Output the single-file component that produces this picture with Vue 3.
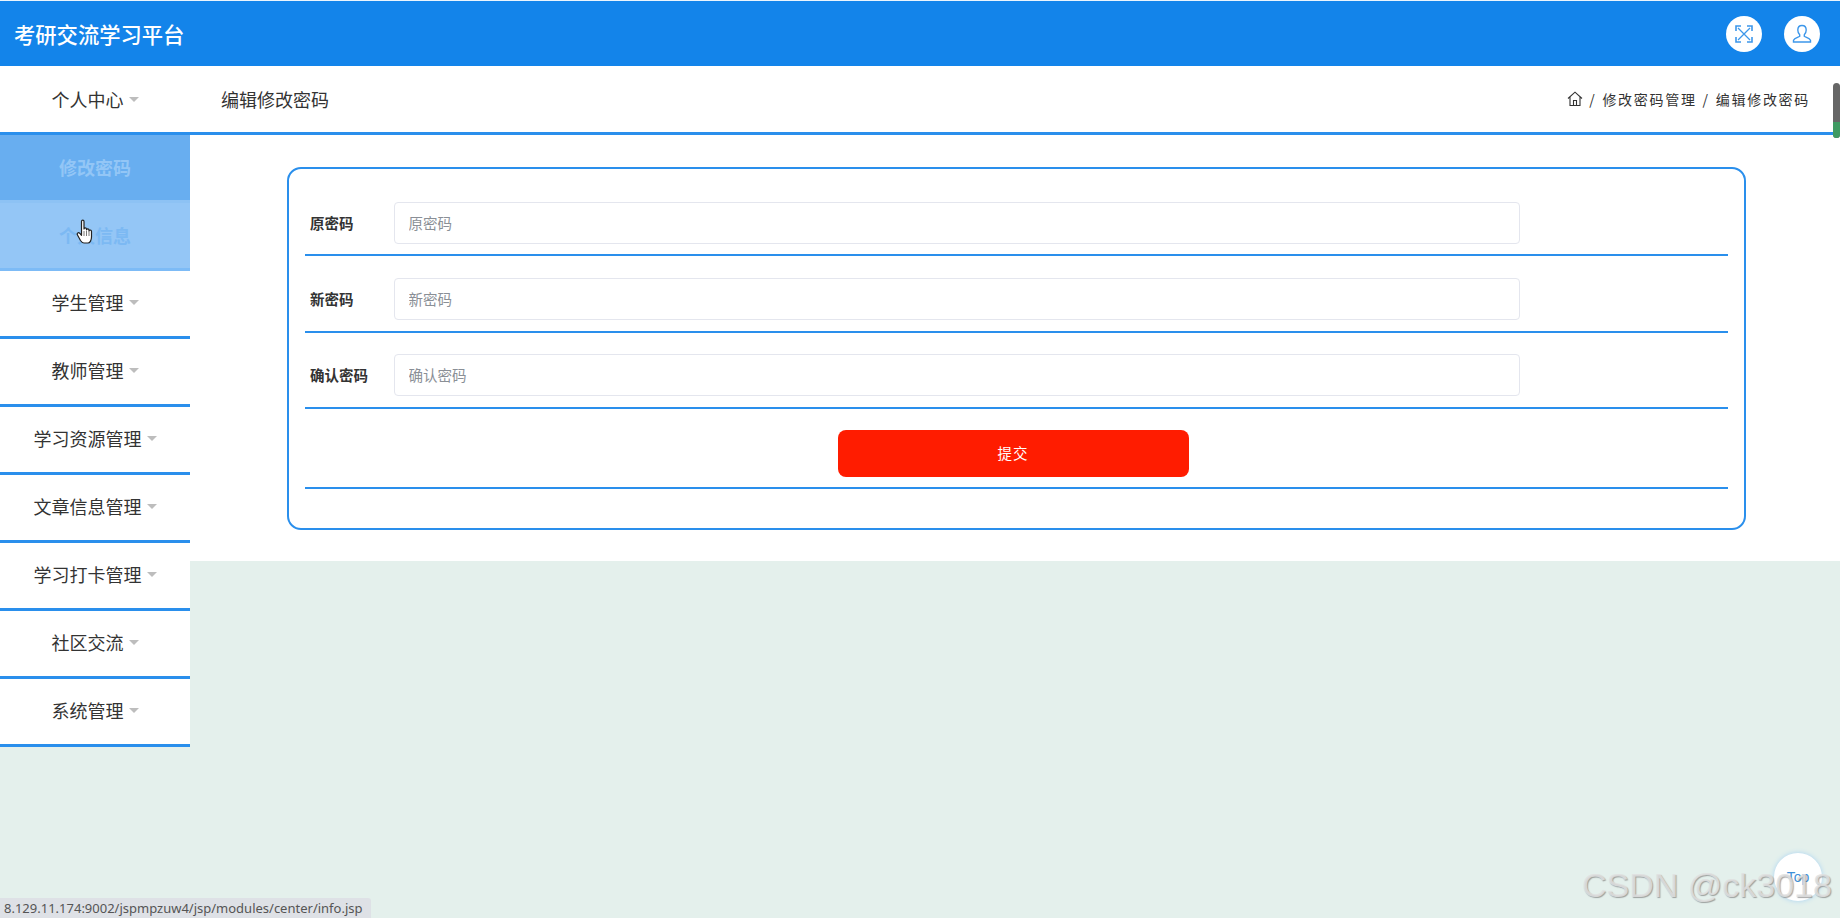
<script setup>
const menus = ['学生管理', '教师管理', '学习资源管理', '文章信息管理', '学习打卡管理', '社区交流', '系统管理']
const fields = ['原密码', '新密码', '确认密码']
</script>

<template>
  <div class="page">
    <header class="topbar">
      <div class="brand">考研交流学习平台</div>
      <div class="actions">
        <span class="round">
          <svg width="20" height="20" viewBox="0 0 20 20" fill="none" stroke="#3d97ea" stroke-width="1.3">
            <path d="M4 4 16 16M16 4 4 16" />
            <path d="M2 7V2h5M13 2h5v5M18 13v5h-5M7 18H2v-5" stroke-width="1.6" />
          </svg>
        </span>
        <span class="round">
          <svg width="20" height="20" viewBox="0 0 20 20" fill="none" stroke="#3d97ea" stroke-width="1.4">
            <path d="M10 1.5c-2.8 0-4.2 2-4.2 4.6 0 2 .8 3.700 1.900 4.700v1.500c-1.500 1.200-5.200 1.700-6.200 4v1.700h17v-1.700c-1-2.300-4.700-2.800-6.200-4v-1.500c1.100-1 1.900-2.700 1.900-4.700 0-2.600-1.400-4.600-4.200-4.600z" />
          </svg>
        </span>
      </div>
    </header>

    <div class="body">
      <aside class="side">
        <div class="item first">个人中心<i class="caret"></i></div>
        <div class="sub sub-a">修改密码</div>
        <div class="sub sub-b">个人信息</div>
        <div v-for="m in menus" :key="m" class="item">{{ m }}<i class="caret"></i></div>
      </aside>

      <main class="main">
        <div class="crumbbar">
          <h1 class="title">编辑修改密码</h1>
          <div class="crumbs">
            <svg width="16" height="16" viewBox="0 0 16 16" fill="none" stroke="#333" stroke-width="1.100">
              <path d="M1 7.500 8 1.200l7 6.300M3 6v8.500h10V6M6.500 14.500V9.500h3v5" />
            </svg>
            <span class="sep">/</span><span>修改密码管理</span><span class="sep">/</span><span>编辑修改密码</span>
          </div>
        </div>

        <section class="panel">
          <form class="card" @submit.prevent>
            <div v-for="f in fields" :key="f" class="row">
              <label class="label">{{ f }}</label>
              <input class="input" :placeholder="f" />
            </div>
            <div class="row row-btn">
              <button class="submit" type="submit">提交</button>
            </div>
          </form>
        </section>
      </main>
    </div>

    <svg class="hand" width="20" height="26" viewBox="0 0 20 26">
      <path d="M5.500 2.500c0-1.800 2.500-1.800 2.500 0V10c.2-1.500 2.400-1.500 2.500 0v.8c.3-1.400 2.400-1.300 2.500.2v.8c.4-1.200 2.400-1 2.500.5V18c0 3-1.500 6-3.500 6H8c-1.500 0-2.500-1-3.500-2.500L1.500 16c-1-1.800 1-3 2.300-1.600l1.700 1.900z" fill="#fff" stroke="#222" stroke-width="1.200" stroke-linejoin="round" />
      <path d="M8 12v5M10.500 12v5M13 12v5" stroke="#555" stroke-width=".8" />
    </svg>

    <div class="scroll"><span class="scroll-end"></span></div>
    <div class="status">8.129.11.174:9002/jspmpzuw4/jsp/modules/center/info.jsp</div>
    <div class="to-top">Top</div>
    <div class="mark">CSDN @ck3018</div>
  </div>
</template>

<style>
html, body { margin: 0; height: 100%; overflow: hidden; }
</style>

<style scoped>
.page {
  position: relative;
  width: 1840px;
  height: 918px;
  overflow: hidden;
  background: #e4f0ec;
  color: #333;
  font-family: "Noto Sans CJK SC", "Noto Sans", sans-serif;
}
.topbar {
  box-sizing: border-box;
  height: 66px;
  border-top: 1px solid #eaf4fd;
  background: #1384ea;
  display: flex;
  align-items: center;
  justify-content: space-between;
  padding: 0 20px 0 14px;
}
.brand { color: #fff; font-size: 21.300px; font-weight: 500; }
.actions { display: flex; gap: 22px; }
.round {
  width: 36px;
  height: 36px;
  border-radius: 50%;
  background: #fff;
  display: flex;
  align-items: center;
  justify-content: center;
}
.body { display: flex; align-items: flex-start; }
.side { width: 190px; flex: none; }
.item {
  box-sizing: border-box;
  height: 68px;
  padding-bottom: 4px;
  background: #fff;
  border-bottom: 3px solid #2a8fec;
  display: flex;
  align-items: center;
  justify-content: center;
  font-size: 18px;
}
.item.first { height: 69px; padding-bottom: 0; }
.caret {
  margin-left: 5px;
  margin-top: 1px;
  border-left: 5px solid transparent;
  border-right: 5px solid transparent;
  border-top: 5px solid #bdbdbd;
}
.sub {
  box-sizing: border-box;
  height: 68px;
  display: flex;
  align-items: center;
  justify-content: center;
  font-size: 18px;
  font-weight: 700;
}
.sub-a { background: #68aef0; color: #93c6f6; border-bottom: 3px solid #8dc2f4; padding-bottom: 2px; }
.sub-b { background: #94c6f6; color: #7cb9f3; border-bottom: 3px solid #7dbbf6; padding-bottom: 2px; }
.main { flex: 1; min-width: 0; }
.crumbbar {
  box-sizing: border-box;
  height: 69px;
  background: #fff;
  border-bottom: 3px solid #2a8fec;
  display: flex;
  align-items: center;
  justify-content: space-between;
  padding: 0 30px 0 32px;
}
.title { margin: 0 0 0 -1px; font-size: 18px; font-weight: 400; color: #333; }
.crumbs { display: flex; align-items: center; font-size: 14px; letter-spacing: 1.700px; color: #333; }
.sep { margin: 0 6px; }
.panel {
  background: #fff;
  padding: 32px 94px 31px 97px;
}
.card {
  box-sizing: border-box;
  height: 363px;
  border: 2px solid #2a8fec;
  border-radius: 14px;
  padding: 11px 16px 0;
}
.row {
  display: flex;
  align-items: center;
  padding: 22px 0 11px;
  border-bottom: 2px solid #2a8fec;
}
.row:first-child { padding-bottom: 10px; }
.row:nth-child(3) { padding-top: 21px; }
.label { width: 89px; flex: none; padding: 0 0 2px 5px; box-sizing: border-box; font-size: 14.500px; font-weight: 700; color: #333; }
.input {
  box-sizing: border-box;
  width: 1126px;
  height: 42px;
  border: 1px solid #e4e6ee;
  border-radius: 4px;
  padding: 0 13.500px 2px;
  font-family: inherit;
  font-size: 14.500px;
  outline: none;
  background: #fff;
}
.input::placeholder { color: #8a8f96; }
.row-btn { justify-content: center; padding: 21px 7px 10px 0; }
.submit {
  width: 351px;
  height: 47px;
  padding: 0 0 2px;
  border: none;
  border-radius: 8px;
  background: #ff1c00;
  color: #fff;
  font-family: inherit;
  font-size: 14.500px;
  letter-spacing: 1px;
}
.hand { position: absolute; left: 76px; top: 219px; }
.scroll {
  position: absolute;
  right: 0;
  top: 83px;
  width: 7px;
  height: 55px;
  border-radius: 4px;
  background: #666;
  overflow: hidden;
}
.scroll-end { display: block; margin-top: 39px; height: 16px; background: #3f9a62; }
.status {
  position: absolute;
  left: 0;
  bottom: 0;
  box-sizing: border-box;
  width: 371px;
  height: 20px;
  padding-left: 4px;
  border-top-right-radius: 3px;
  background: #dee1e6;
  color: #555;
  font-family: "Noto Sans", sans-serif;
  font-size: 13px;
  line-height: 20px;
  white-space: nowrap;
}
.to-top {
  position: absolute;
  left: 1774px;
  top: 853px;
  width: 48px;
  height: 48px;
  border-radius: 50%;
  background: #fff;
  box-shadow: 0 0 5px #a9d3f3;
  color: #3d8fd8;
  font-family: "Liberation Sans", sans-serif;
  font-size: 14px;
  line-height: 48px;
  text-align: center;
}
.mark {
  position: absolute;
  left: 1582px;
  top: 866px;
  color: rgba(225, 225, 225, 0.85);
  font-family: "Liberation Sans", sans-serif;
  font-size: 34px;
  line-height: 38px;
  white-space: nowrap;
  text-shadow: 1px 1px 1px rgba(110, 110, 110, 0.6);
}
</style>
